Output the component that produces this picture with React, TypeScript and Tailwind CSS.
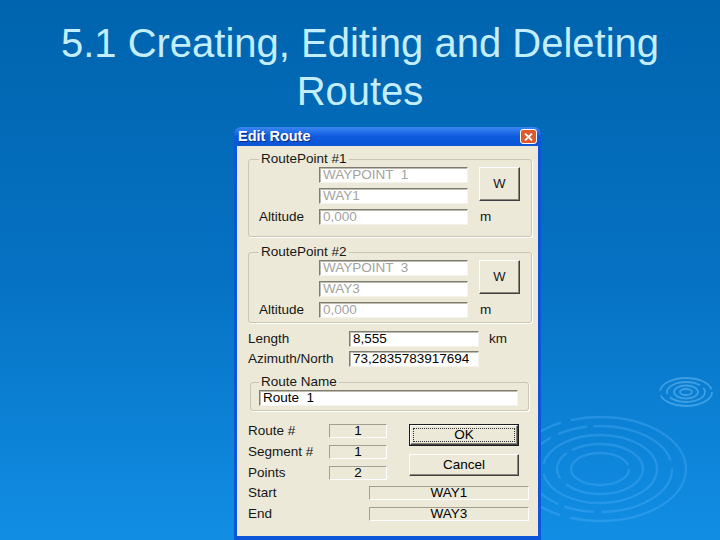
import React from 'react';

const sunken =
  'border border-t-[#7f7d72] border-l-[#7f7d72] border-b-[#f4f3ee] border-r-[#f4f3ee] shadow-[inset_1px_1px_0_#bdbab0]';
const statik =
  'border border-t-[#a29f90] border-l-[#a29f90] border-b-white border-r-white';
const raised =
  'border border-t-white border-l-white border-r-[#404040] border-b-[#404040] shadow-[inset_-1px_-1px_0_#8a887c] bg-[#ece9d8]';

function Edit({ value, disabled, className }: { value: string; disabled?: boolean; className?: string }) {
  return (
    <div
      className={`h-[16px] bg-white ${sunken} pl-[3px] leading-[14px] whitespace-pre ${
        disabled ? 'text-[#a3a3a0]' : 'text-black'
      } ${className ?? ''}`}
    >
      {value}
    </div>
  );
}

function Static({ value }: { value: string }) {
  return (
    <div className={`h-[14px] bg-[#ece9d8] ${statik} text-center leading-[12px] text-black`}>{value}</div>
  );
}

function RoutePoint({ title, name, short, last }: { title: string; name: string; short: string; last?: boolean }) {
  return (
    <fieldset
      className={`ml-[11px] w-[284px] border border-[#c9c6b6] rounded-[3px] shadow-[1px_1px_0_#ffffff] pt-[1px] ${
        last ? 'mt-[8px] pb-[4px]' : 'pb-[11px]'
      }`}
    >
      <legend className="ml-[10px] px-[2px] leading-[14px]">{title}</legend>
      <div className="grid grid-cols-[70px_149px_11px_41px] grid-rows-[16px_16px_16px] gap-y-[5px] items-center">
        <Edit value={name} disabled className="col-start-2 row-start-1" />
        <button className={`col-start-4 row-start-1 row-span-2 self-start h-[34px] ${raised} text-[13px]`}>W</button>
        <Edit value={short} disabled className="col-start-2 row-start-2" />
        <span className="col-start-1 row-start-3 pl-[10px]">Altitude</span>
        <Edit value="0,000" disabled className="col-start-2 row-start-3" />
        <span className="col-start-4 row-start-3 pl-[1px]">m</span>
      </div>
    </fieldset>
  );
}

function Ripples() {
  const small = [
    [26, 14],
    [19, 10],
    [12, 6.5],
    [6, 3],
  ];
  const big = [
    [86, 52],
    [72, 43],
    [57, 34],
    [43, 25],
    [29, 16],
  ];
  return (
    <svg className="absolute inset-0" width="720" height="540" viewBox="0 0 720 540">
      <g fill="none" stroke="#8ad0ff" strokeOpacity="0.4" strokeWidth="1.8">
        {small.map(([rx, ry], i) => (
          <ellipse key={i} cx="686" cy="392" rx={rx} ry={ry} strokeDasharray={i % 2 ? '40 4' : '60 5'} />
        ))}
      </g>
      <g fill="none" stroke="#5cb6ff" strokeOpacity="0.3" strokeWidth="2.4">
        {big.map(([rx, ry], i) => (
          <ellipse key={i} cx="600" cy="469" rx={rx} ry={ry} strokeDasharray={i % 2 ? '90 8 30 6' : '140 10'} />
        ))}
      </g>
    </svg>
  );
}

export default function App() {
  return (
    <div className="relative w-[720px] h-[540px] overflow-hidden bg-gradient-to-b from-[#0064ae] via-[#0671c2] to-[#118ee4] font-['Liberation_Sans',Arial,sans-serif]">
      <Ripples />
      <div className="relative">
        <h1 className="pt-[19px] text-center text-[40px] leading-[48px] text-[#c2eeff]">
          5.1 Creating, Editing and Deleting
          <br />
          Routes
        </h1>

        {/* Edit Route dialog */}
        <div className="mt-[12px] ml-[234px] w-[307px] h-[413px] bg-[#0c56da] rounded-t-[7px] flex flex-col">
          <div className="h-[19px] flex items-center justify-between pl-[4px] pr-[4px] rounded-t-[7px] bg-gradient-to-b from-[#3a86f4] via-[#0d5ade] to-[#0b55d6]">
            <span className="text-white font-bold text-[14.5px] leading-none [text-shadow:1px_1px_0_#0a2a80]">
              Edit Route
            </span>
            <div className="w-[17px] h-[15px] rounded-[3px] border border-white bg-[#e0582e] flex items-center justify-center">
              <svg width="9" height="8" viewBox="0 0 9 8">
                <path d="M1 0.5 L8 7.5 M8 0.5 L1 7.5" stroke="white" strokeWidth="1.8" />
              </svg>
            </div>
          </div>

          <div className="mx-[3px] h-[390px] bg-[#ece9d8] pt-[6px] text-[13.5px] text-[#161616]">
            <RoutePoint title="RoutePoint #1" name="WAYPOINT  1" short="WAY1" />
            <RoutePoint title="RoutePoint #2" name="WAYPOINT  3" short="WAY3" last />

            <div className="mt-[8px] ml-[11px] grid grid-cols-[101px_130px_10px_auto] grid-rows-[16px_16px] gap-y-[4px] items-center">
              <span>Length</span>
              <Edit value="8,555" />
              <span className="col-start-4">km</span>
              <span className="col-start-1">Azimuth/North</span>
              <Edit value="73,2835783917694" />
            </div>

            <fieldset className="mt-[8px] ml-[13px] w-[279px] border border-[#c9c6b6] rounded-[3px] shadow-[1px_1px_0_#ffffff] pt-[1px] pb-[4px]">
              <legend className="ml-[8px] px-[2px] leading-[14px]">Route Name</legend>
              <Edit value="Route  1" className="ml-[8px] w-[259px]" />
            </fieldset>

            <div className="mt-[13px] ml-[11px] flex">
              <div className="grid grid-cols-[81px_58px] grid-rows-[14px_14px_14px] gap-y-[7px] items-center">
                <span>Route #</span>
                <Static value="1" />
                <span>Segment #</span>
                <Static value="1" />
                <span>Points</span>
                <Static value="2" />
              </div>
              <div className="ml-[22px] flex flex-col gap-[8px]">
                <div className="w-[110px] h-[22px] border border-[#1c1c1c]">
                  <div className={`h-full ${raised} p-[2px]`}>
                    <div className="h-full border border-dotted border-[#303030] flex items-center justify-center text-black leading-none">
                      OK
                    </div>
                  </div>
                </div>
                <button className={`w-[110px] h-[22px] ${raised} text-black leading-none`}>Cancel</button>
              </div>
            </div>

            <div className="mt-[6px] ml-[11px] grid grid-cols-[121px_160px] grid-rows-[14px_14px] gap-y-[7px] items-center">
              <span>Start</span>
              <Static value="WAY1" />
              <span>End</span>
              <Static value="WAY3" />
            </div>
          </div>
        </div>
      </div>
    </div>
  );
}
